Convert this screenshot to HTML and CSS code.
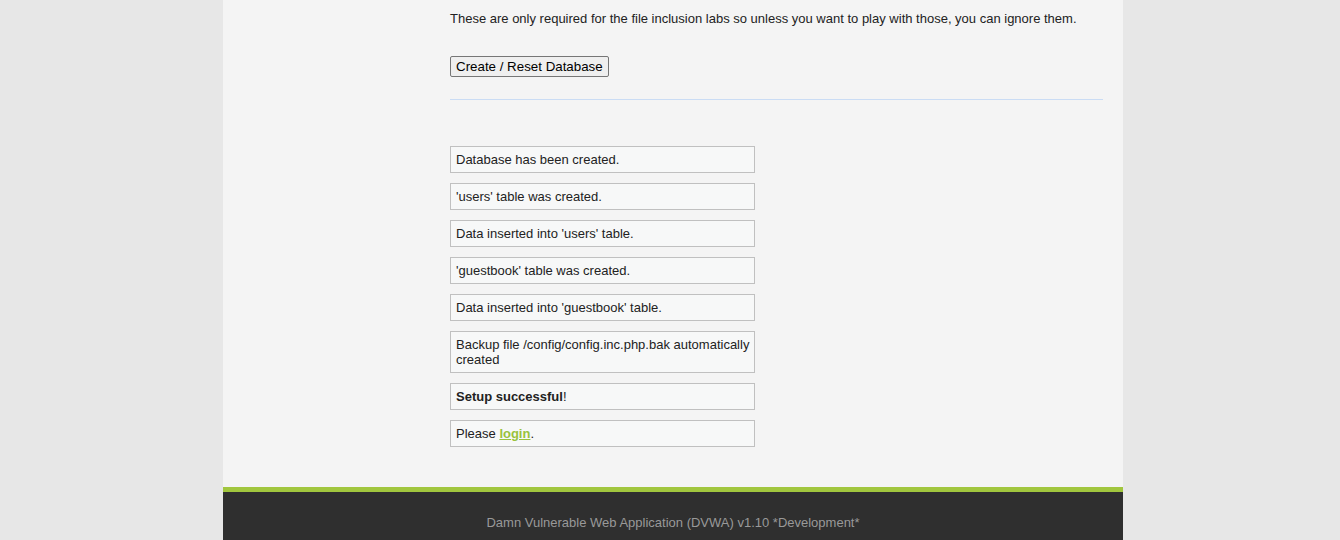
FILE: index.html
```html
<!DOCTYPE html>
<html>
<head>
<meta charset="utf-8">
<link rel="stylesheet" href="styles.css">
</head>
<body>
<div class="container">
  <div class="main">
    <p class="intro">These are only required for the file inclusion labs so unless you want to play with those, you can ignore them.</p>
    <form class="form"><button type="button" class="btn">Create / Reset Database</button></form>
    <hr class="rule">
    <div class="messages">
      <div class="message">Database has been created.</div>
      <div class="message">'users' table was created.</div>
      <div class="message">Data inserted into 'users' table.</div>
      <div class="message">'guestbook' table was created.</div>
      <div class="message">Data inserted into 'guestbook' table.</div>
      <div class="message">Backup file /config/config.inc.php.bak automatically created</div>
      <div class="message"><strong>Setup successful</strong>!</div>
      <div class="message">Please <a href="#" class="login">login</a>.</div>
    </div>
  </div>
  <div class="footer">Damn Vulnerable Web Application (DVWA) v1.10 *Development*</div>
</div>
</body>
</html>
```
FILE: styles.css
```css
html, body {
  margin: 0;
  padding: 0;
}
body {
  background: #e7e7e7;
  font-family: "Liberation Sans", Arial, sans-serif;
  font-size: 13px;
  color: #222;
}
.container {
  width: 900px;
  margin-left: calc(50% - 447px);
  background: #f4f4f4;
}
.main {
  padding: 11px 20px 40px 227px;
}
.intro {
  margin: 0;
  line-height: 15px;
}
.form {
  margin: 30px 0 0 0;
}
.btn {
  font-family: "Liberation Sans", Arial, sans-serif;
  font-size: 13.33px;
  color: #000;
  background: #efefef;
  border: 1px solid #767676;
  border-radius: 2px;
  padding: 1px 5px;
  height: 21px;
  line-height: 15px;
}
.rule {
  margin: 22px 0 0 0;
  border: 0;
  height: 1px;
  background: #cadcf4;
}
.messages {
  margin-top: 46px;
}
.message {
  width: 296px;
  background: #f7f8f8;
  border: 1px solid #c0c0c0;
  padding: 5px 2px 5px 5px;
  margin: 10px 0 0 0;
  line-height: 15px;
}
.login {
  color: #99c23d;
  font-weight: bold;
}
.footer {
  border-top: 5px solid #a1c63e;
  background: #2f2f2f;
  color: #999;
  text-align: center;
  padding: 23px 0 10px;
  font-size: 13px;
  line-height: 15px;
}
```
